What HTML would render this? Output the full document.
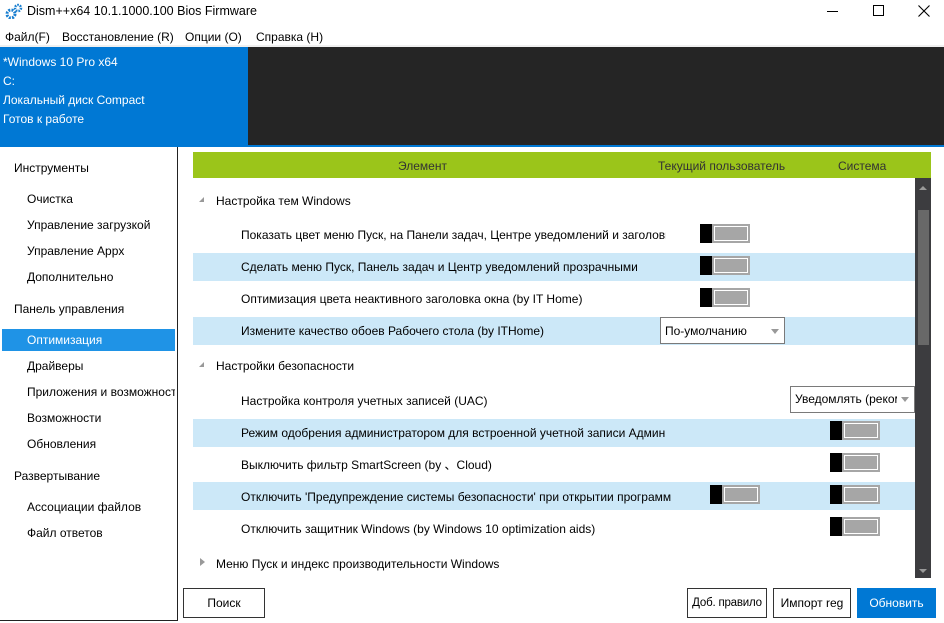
<!DOCTYPE html>
<html><head><meta charset="utf-8"><style>
*{margin:0;padding:0;box-sizing:border-box}
body{width:944px;height:623px;overflow:hidden;background:#fff;font-family:"Liberation Sans","DejaVu Sans",sans-serif;font-size:12px;color:#000;position:relative}
.a{position:absolute;white-space:nowrap}
.band{position:absolute;left:193px;width:722px;height:28px;background:#cce8f8}
.tg{position:absolute;width:50px;height:19px;background:#a6a6a6}
.tg:before{content:"";position:absolute;left:0;top:0;width:12px;height:19px;background:#000}
.tg:after{content:"";position:absolute;left:14px;top:2px;right:2px;bottom:2px;border:1px solid #fff}
.btn{position:absolute;top:588px;height:30px;border:1px solid #333;background:#fff;text-align:center;line-height:28px;font-size:12px;white-space:nowrap;overflow:hidden}
.dd{position:absolute;height:27px;border:1px solid #7a7a7a;background:#fff;padding-left:4px;line-height:25px;overflow:hidden;white-space:nowrap}
.dd span{display:inline-block;overflow:hidden;vertical-align:top}
.dd i{position:absolute;right:5px;top:11px;border:4px solid transparent;border-top:5px solid #999;}
</style></head><body>
<svg class="a" style="left:5px;top:3px" width="18" height="16" viewBox="0 0 18 16"><circle cx="6" cy="11" r="4" fill="none" stroke="#1a7fd0" stroke-width="3" stroke-dasharray="2 1.2"/><circle cx="13" cy="5" r="3" fill="none" stroke="#1a7fd0" stroke-width="2.5" stroke-dasharray="1.6 1"/></svg>
<div class="a" style="left:27px;top:4px;font-size:12.5px">Dism++x64 10.1.1000.100 Bios Firmware</div>
<div class="a" style="left:827px;top:11px;width:11px;height:1px;background:#000"></div>
<div class="a" style="left:873px;top:5px;width:11px;height:11px;border:1px solid #000"></div>
<svg class="a" style="left:918px;top:5px" width="12" height="12"><path d="M0.5 0.5L11.5 11.5M11.5 0.5L0.5 11.5" stroke="#000" stroke-width="1.1"/></svg>
<div class="a" style="left:5px;top:30px">Файл(F)</div>
<div class="a" style="left:62px;top:30px">Восстановление (R)</div>
<div class="a" style="left:185px;top:30px">Опции (O)</div>
<div class="a" style="left:256px;top:30px">Справка (H)</div>
<div class="a" style="left:0;top:45px;width:944px;height:2px;background:#f0f0f0"></div>
<div class="a" style="left:0;top:47px;width:944px;height:100px;background:#0078d4"></div>
<div class="a" style="left:248px;top:47px;width:696px;height:98px;background:#252525"></div>
<div class="a" style="left:3px;top:55px;color:#fff">*Windows 10 Pro x64</div>
<div class="a" style="left:3px;top:74px;color:#fff">C:</div>
<div class="a" style="left:3px;top:93px;color:#fff">Локальный диск Compact</div>
<div class="a" style="left:3px;top:112px;color:#fff">Готов к работе</div>
<div class="a" style="left:0;top:147px;width:178px;height:474px;border-right:1px solid #222;border-bottom:1px solid #222"></div>
<div class="a" style="left:2px;top:329px;width:173px;height:22px;background:#1f93e6"></div>
<div class="a" style="left:14px;top:161px">Инструменты</div>
<div class="a" style="left:27px;top:192px">Очистка</div>
<div class="a" style="left:27px;top:218px">Управление загрузкой</div>
<div class="a" style="left:27px;top:244px">Управление Appx</div>
<div class="a" style="left:27px;top:270px">Дополнительно</div>
<div class="a" style="left:14px;top:302px">Панель управления</div>
<div class="a" style="left:27px;top:333px;color:#fff">Оптимизация</div>
<div class="a" style="left:27px;top:359px">Драйверы</div>
<div class="a" style="left:27px;top:385px;width:148px;overflow:hidden">Приложения и возможности</div>
<div class="a" style="left:27px;top:411px">Возможности</div>
<div class="a" style="left:27px;top:437px">Обновления</div>
<div class="a" style="left:14px;top:469px">Развертывание</div>
<div class="a" style="left:27px;top:500px">Ассоциации файлов</div>
<div class="a" style="left:27px;top:526px">Файл ответов</div>
<div class="a" style="left:193px;top:152px;width:738px;height:26px;background:#9bc51a"></div>
<div class="a" style="left:398px;top:159px;color:#333">Элемент</div>
<div class="a" style="left:658px;top:159px;color:#333">Текущий пользователь</div>
<div class="a" style="left:838px;top:159px;color:#333">Система</div>
<div class="a" style="left:915px;top:178px;width:16px;height:400px;background:#3c3c3f"></div>
<div class="a" style="left:918px;top:210px;width:11px;height:135px;background:#686868"></div>
<div class="a" style="left:919px;top:186px;border:4px solid transparent;border-bottom:4px solid #999;border-top:0"></div>
<div class="a" style="left:919px;top:569px;border:4px solid transparent;border-top:4px solid #999;border-bottom:0"></div>
<div class="band" style="top:253px"></div>
<div class="band" style="top:317px"></div>
<div class="band" style="top:419px"></div>
<div class="band" style="top:482px"></div>
<div class="a" style="left:199px;top:197px;border-left:5px solid transparent;border-bottom:5px solid #999"></div>
<div class="a" style="left:216px;top:194px">Настройка тем Windows</div>
<div class="a" style="left:241px;top:228px;width:425px;overflow:hidden">Показать цвет меню Пуск, на Панели задач, Центре уведомлений и заголовках окон</div>
<div class="tg" style="left:700px;top:224px"></div>
<div class="a" style="left:241px;top:260px">Сделать меню Пуск, Панель задач и Центр уведомлений прозрачными</div>
<div class="tg" style="left:700px;top:256px"></div>
<div class="a" style="left:241px;top:292px">Оптимизация цвета неактивного заголовка окна (by IT Home)</div>
<div class="tg" style="left:700px;top:288px"></div>
<div class="a" style="left:241px;top:324px">Измените качество обоев Рабочего стола (by ITHome)</div>
<div class="dd" style="left:660px;top:317px;width:125px;line-height:27px">По-умолчанию<i></i></div>
<div class="a" style="left:199px;top:362px;border-left:5px solid transparent;border-bottom:5px solid #999"></div>
<div class="a" style="left:216px;top:359px">Настройки безопасности</div>
<div class="a" style="left:241px;top:394px">Настройка контроля учетных записей (UAC)</div>
<div class="dd" style="left:790px;top:386px;width:125px;line-height:25px"><span style="width:102px">Уведомлять (рекомендуется)</span><i style="top:10px"></i></div>
<div class="a" style="left:241px;top:426px;width:425px;overflow:hidden">Режим одобрения администратором для встроенной учетной записи Администратор</div>
<div class="tg" style="left:830px;top:421px"></div>
<div class="a" style="left:241px;top:458px;line-height:14px">Выключить фильтр SmartScreen (by 、Cloud)</div>
<div class="tg" style="left:830px;top:453px"></div>
<div class="a" style="left:241px;top:490px;width:435px;overflow:hidden">Отключить 'Предупреждение системы безопасности' при открытии программ</div>
<div class="tg" style="left:710px;top:485px"></div>
<div class="tg" style="left:830px;top:485px"></div>
<div class="a" style="left:241px;top:522px">Отключить защитник Windows (by Windows 10 optimization aids)</div>
<div class="tg" style="left:830px;top:517px"></div>
<div class="a" style="left:200px;top:558px;border-top:4px solid transparent;border-bottom:4px solid transparent;border-left:5px solid #999"></div>
<div class="a" style="left:216px;top:557px">Меню Пуск и индекс производительности Windows</div>
<div class="btn" style="left:183px;width:82px">Поиск</div>
<div class="btn" style="left:687px;width:80px;font-size:11.5px;letter-spacing:-0.2px">Доб. правило</div>
<div class="btn" style="left:773px;width:78px">Импорт reg</div>
<div class="btn" style="left:857px;width:79px;background:#0078d4;border-color:#0078d4;color:#fff">Обновить</div>
</body></html>
